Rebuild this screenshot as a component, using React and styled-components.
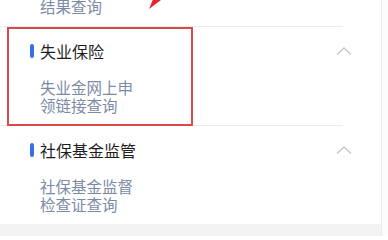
import React from 'react'
import styled, { createGlobalStyle } from 'styled-components';

const GlobalStyle = createGlobalStyle`
  html, body {
    margin: 0;
    padding: 0;
    background: #ffffff;
  }
  body {
    font-family: "Noto Sans CJK SC", "Noto Sans", sans-serif;
  }
`;

const Page = styled.div`
  position: relative;
  width: 388px;
  height: 236px;
  overflow: hidden;
  display: flex;
  background: #ffffff;
`;

const Main = styled.div`
  width: 381px;
  height: 100%;
  display: flex;
  flex-direction: column;
  overflow: hidden;
`;

const ScrollTrack = styled.div`
  flex: 1;
  border-left: 1px solid #ececec;
  background: #fcfcfc;
`;

const List = styled.div`
  flex: none;
  margin-top: -73px;
  display: flex;
  flex-direction: column;
`;

const Footer = styled.div`
  flex: 1;
  background: #f3f3f3;
`;

const Section = styled.div`
  position: relative;
  margin-right: 38px;
  border-top: 1px solid #ededed;
  padding: 14px 0 11px 30px;
  &::after{
    content: '';
    display: ${(p) => (p.$marked ? 'block' : 'none')};
    position: absolute;
    left: 7px;
    top: 0;
    width: 186px;
    height: 99px;
    box-sizing: border-box;
    border: 2px solid #d9484b;
    z-index: 2;
  }
`;

const Header = styled.div`
  display: flex;
  align-items: center;
  height: 20px;
`;

const Bar = styled.span`
  width: 4px;
  height: 14px;
  border-radius: 2px;
  background: #3a6ee4;
  margin-right: 6px;
  flex: none;
`;

const Title = styled.span`
  flex: 1;
  font-size: 16px;
  line-height: 20px;
  color: #1e1e1e;
`;

const Chevron = styled.svg`
  width: 16px;
  height: 8px;
  margin-right: -9px;
  flex: none;
`;

const Sub = styled.div`
  margin: 17px 0 0 10px;
  font-size: 15.5px;
  line-height: 18px;
  color: #7b8ba6;
`;

const Arrow = styled.svg`
  position: absolute;
  left: 149px;
  top: 0;
  width: 12px;
  height: 9px;
`;

const items = [
  { title: '工伤保险', lines: ['工伤认定', '结果查询'] },
  { title: '失业保险', lines: ['失业金网上申', '领链接查询'], marked: true },
  { title: '社保基金监管', lines: ['社保基金监督', '检查证查询'] },
];

const App = () => {
  return (
    <Page>
      <GlobalStyle />
      <Main>
        <List>
          {items.map((item) => (
            <Section key={item.title} $marked={item.marked}>
              <Header>
                <Bar />
                <Title>{item.title}</Title>
                <Chevron viewBox="0 0 16 8">
                  <polyline points="1,7.5 8,1 15,7.5" fill="none" stroke="#c4c4c4" strokeWidth="1.3" />
                </Chevron>
              </Header>
              <Sub>
                {item.lines.map((l) => <div key={l}>{l}</div>)}
              </Sub>
            </Section>
          ))}
        </List>
        <Footer />
      </Main>
      <ScrollTrack />
      <Arrow viewBox="0 0 12 9">
        <polygon points="0,9 3.7,0 12,0" fill="#e3262b" />
      </Arrow>
    </Page>
  )
}

export default App;
